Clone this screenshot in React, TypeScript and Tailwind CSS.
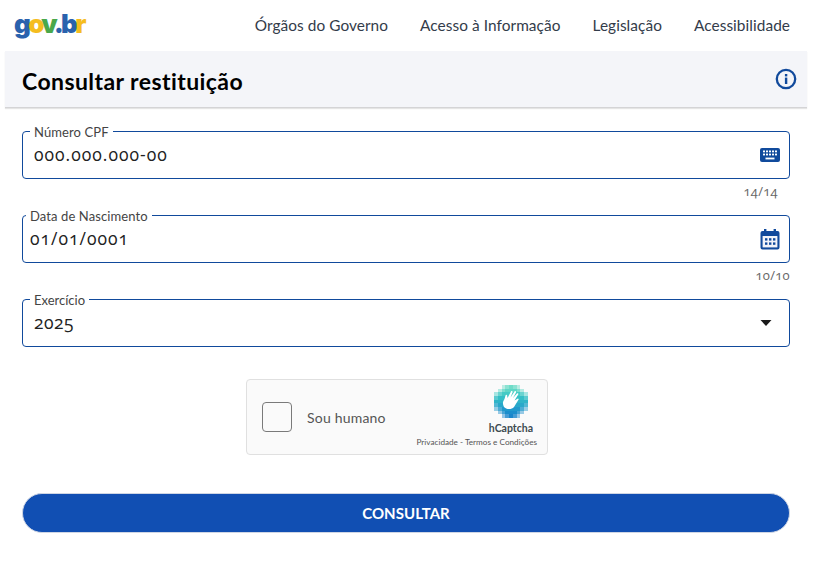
import React from "react";

function Field({ label, value, right, counter, pl, counterPr, labelLeft }: { label: string; value: string; right: React.ReactNode; counter?: string; pl: string; counterPr?: string; labelLeft: string }) {
  return (
    <div className="flex flex-col">
      <div className={`relative h-[48px] border border-[#114a9c] rounded-[4px] flex items-center justify-between pr-[9px] ${pl}`}>
        <span className={`absolute -top-[6px] ${labelLeft} bg-white px-[4px] text-[13px] leading-[13px] text-[#444] tracking-[0.1px]`}>{label}</span>
        <span className="-mt-[2px] text-[17.5px] leading-[20px] text-[#222] tracking-[1px] oldstyle-nums font-['Open_Sans',sans-serif]">{value}</span>
        <span className="flex">{right}</span>
      </div>
      <div className={`h-[36px] pt-[5px] text-right text-[13px] leading-[14px] text-[#666] tracking-[0.3px] oldstyle-nums font-['Open_Sans',sans-serif] ${counterPr ?? ""}`}>{counter ?? ""}</div>
    </div>
  );
}

const cells: { x: number; y: number; c: string; o: number }[] = [];
for (let y = 0; y < 9; y++) {
  for (let x = 0; x < 9; x++) {
    const d = Math.abs(x - 4) + Math.abs(y - 4);
    if (d > 6) continue;
    const top = ["#6fdcc8", "#5fd6c6", "#45cbc6", "#35bfc6", "#2fb4c8", "#29a8ca", "#2299cc", "#1c8ecc", "#1a86cc"][y];
    cells.push({ x, y, c: top, o: d >= 6 ? 0.45 : d === 5 ? 0.8 : 1 });
  }
}

export default function App() {
  return (
    <div className="w-[816px] h-[575px] bg-white overflow-hidden font-['Lato','Liberation_Sans',sans-serif]">
      <header className="h-[51px] flex items-center justify-between pl-[14px] pr-[26px]">
        <div className="text-[26px] leading-[30px] font-black tracking-[-2.7px] -mt-[3px] font-['Inter',sans-serif]">
          <span className="text-[#2a62ad]">g</span>
          <span className="text-[#f5bd1f]">o</span>
          <span className="text-[#4aa84a]">v</span>
          <span className="text-[#2a62ad]">.b</span>
          <span className="text-[#f5bd1f]">r</span>
        </div>
        <nav className="flex gap-[32px] text-[15.4px] leading-[20px] text-[#333c4a] tracking-[0.06px] -mt-[1px]">
          <span>Órgãos do Governo</span>
          <span>Acesso à Informação</span>
          <span>Legislação</span>
          <span>Acessibilidade</span>
        </nav>
      </header>

      <section className="ml-[5px] mr-[9px] h-[57px] bg-[#f4f5f9] border-b border-[#d4d4d6] shadow-[0_1px_1px_rgba(0,0,0,0.1)] flex items-center justify-between pl-[17px] pr-[10px]">
        <h1 className="text-[23px] leading-[28px] font-bold text-black tracking-[0.42px] mt-[3px]">Consultar restituição</h1>
        <svg width="22" height="22" viewBox="0 0 22 22" className="-mt-[1px]">
          <circle cx="11" cy="11" r="9.2" fill="none" stroke="#114a9c" strokeWidth="2.3" />
          <rect x="9.900" y="9.600" width="2.400" height="6.400" fill="#114a9c" />
          <rect x="9.900" y="6" width="2.400" height="2.400" fill="#114a9c" />
        </svg>
      </section>

      <main className="pl-[22px] pr-[26px] pt-[23px] flex flex-col">
        <Field
          label="Número CPF"
          labelLeft="left-[7px]"
          value="000.000.000-00"
          counter="14/14"
          pl="pl-[11px]"
          counterPr="pr-[12px]"
          right={
            <svg width="20" height="16" viewBox="0 0 20 16">
              <rect x="0" y="1" width="20" height="14" rx="2" fill="#114a9c" />
              <g fill="#fff">
                {[3, 6, 9, 12, 15].map((x) => (
                  <rect key={`a${x}`} x={x} y="3.500" width="2" height="1.800" />
                ))}
                {[3, 6, 9, 12, 15].map((x) => (
                  <rect key={`b${x}`} x={x} y="6.600" width="2" height="1.800" />
                ))}
                <rect x="5.500" y="10.600" width="9" height="1.800" />
              </g>
            </svg>
          }
        />
        <Field
          label="Data de Nascimento"
          labelLeft="left-[3px]"
          value="01/01/0001"
          counter="10/10"
          pl="pl-[7px]"
          right={
            <svg width="20" height="22" viewBox="0 0 20 22">
              <path d="M4 1h2.400v2h7.200V1H16v2h1.600A2 2 0 0 1 19.500 5v14.500a2 2 0 0 1-2 2h-15a2 2 0 0 1-2-2V5a2 2 0 0 1 2-2H4z" fill="#114a9c" />
              <rect x="2.600" y="8" width="14.800" height="11.400" fill="#f2f4f9" />
              <g fill="#114a9c">
                {[5, 9, 13].map((x) => (
                  <rect key={`c${x}`} x={x} y="10.200" width="2.400" height="2.400" />
                ))}
                {[5, 9, 13].map((x) => (
                  <rect key={`d${x}`} x={x} y="14.400" width="2.400" height="2.400" />
                ))}
              </g>
            </svg>
          }
        />
        <div className="relative h-[48px] border border-[#114a9c] rounded-[4px] flex items-center justify-between pl-[11px] pr-[17px]">
          <span className="absolute -top-[6px] left-[7px] bg-white px-[4px] text-[13px] leading-[13px] text-[#444]">Exercício</span>
          <span className="-mt-[2px] text-[17.5px] leading-[20px] text-[#222] tracking-[0.5px] oldstyle-nums font-['Open_Sans',sans-serif]">2025</span>
          <svg width="12" height="6" viewBox="0 0 12 6">
            <path d="M0.500 0h11L6 6z" fill="#1a1a1a" />
          </svg>
        </div>

        <div className="self-start ml-[224px] mt-[32px] w-[302px] h-[76px] bg-[#fafafa] border border-[#e0e0e0] rounded-[4px] flex items-center pl-[15px] pr-[10px] justify-between">
          <div className="flex items-center gap-[15px]">
            <div className="w-[30px] h-[30px] bg-[#fafafa] border border-[#7a7a7a] rounded-[4px]" />
            <span className="text-[14px] text-[#555] tracking-[0.2px]">Sou humano</span>
          </div>
          <div className="flex flex-col items-end">
            <svg width="34" height="33" viewBox="0 0 34 33" className="mr-[9px] mt-[2px]">
              <g shapeRendering="crispEdges">
                {cells.map((p) => (
                  <rect key={`${p.x}-${p.y}`} x={p.x * 3.78} y={p.y * 3.67} width="3.800" height="3.700" fill={p.c} opacity={p.o} />
                ))}
              </g>
              <path d="M10 22c-1.500-3 -1.500-5 .5-8l1-3.500c.5-1 1.600-.8 1.700.3L13.500 13l3.500-6.500c.6-1 2-.4 1.600.8L16.500 12.500l4-6c.7-.9 2-.2 1.500 1L19 13l4-4.500c.8-.8 1.800 0 1.200 1L20.500 15.500l3-1.800c1-.4 1.500.7.800 1.400L20 22c-2.500 3-8 2.500-10 0z" fill="#fff" />
            </svg>
            <span className="text-[10.5px] leading-[12px] font-bold text-[#3d4a50] mr-[4px] mt-[4px]">hCaptcha</span>
            <span className="text-[8.2px] leading-[11px] text-[#555] mt-[3px] mb-[3px]">Privacidade - Termos e Condições</span>
          </div>
        </div>

        <button className="mt-[38px] h-[40px] w-full rounded-full bg-[#114fb3] border border-[#cfd6e4] text-white text-[15px] tracking-[0.05px] font-bold">
          CONSULTAR
        </button>
      </main>
    </div>
  );
}
